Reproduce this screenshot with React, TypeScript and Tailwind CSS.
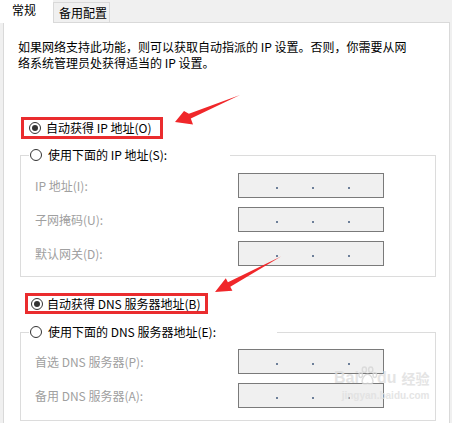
import type { ReactNode } from "react";

const font = "font-['Noto_Sans_CJK_SC','Noto_Sans',sans-serif]";

function Radio({ checked }: { checked?: boolean }) {
  return (
    <span className="flex h-[12px] w-[12px] shrink-0 items-center justify-center rounded-full border border-[#333] bg-white">
      {checked ? <span className="h-[6px] w-[6px] rounded-full bg-[#333]" /> : null}
    </span>
  );
}

function IpBox() {
  return (
    <div className="flex h-[25px] w-[146px] items-center gap-[34px] border border-[#7a7a7a] bg-[#f0f0f0] pl-[37px] pt-[5px]">
      <span className="h-[2px] w-[2px] bg-[#6d7f99]" />
      <span className="h-[2px] w-[2px] bg-[#6d7f99]" />
      <span className="h-[2px] w-[2px] bg-[#6d7f99]" />
    </div>
  );
}

function Row({ label }: { label: string }) {
  return (
    <div className="flex items-center">
      <span className="w-[217px] pl-[14px] text-[#a0a0a0]">{label}</span>
      <IpBox />
    </div>
  );
}

function Group({
  legend,
  legendWidth,
  pt,
  pb,
  children,
}: {
  legend: string;
  legendWidth: string;
  pt: string;
  pb: string;
  children: ReactNode;
}) {
  return (
    <fieldset className={`ml-[16px] w-[416px] border border-[#dcdcdc] ${pt} ${pb}`}>
      <legend className={`ml-[8px] ${legendWidth} bg-white`}>
        <span className="flex h-[16px] items-center gap-[6px] pl-px">
          <Radio />
          <span className="text-black">{legend}</span>
        </span>
      </legend>
      <div className="flex flex-col gap-[9px]">{children}</div>
    </fieldset>
  );
}

export default function App() {
  return (
    <div className={`relative h-[423px] w-[452px] overflow-hidden bg-[#f0f0f0] text-[12px] leading-[16px] text-black ${font}`}>
      {/* tabs */}
      <div className="flex h-[23px] items-end">
        <div className="flex h-[23px] w-[53px] items-center bg-white pb-[3px] pl-[12px]">常规</div>
        <div className="flex h-[21px] w-[57px] items-center border border-[#d9d9d9] bg-[#f0f0f0] pl-[5px]">
          备用配置
        </div>
        <div className="mr-[2px] h-px flex-1 bg-[#d9d9d9]" />
      </div>

      {/* panel */}
      <div className="ml-[3px] mr-[2px] h-[420px] border-x border-[#d9d9d9] bg-white pt-[16px]">
        <p className="pl-[14px]">
          如果网络支持此功能，则可以获取自动指派的 IP 设置。否则，你需要从网
          <br />
          络系统管理员处获得适当的 IP 设置。
        </p>

        <div className="ml-[17px] mt-[46px] flex h-[22px] w-[142px] items-center gap-[5px] border-[3px] border-[#ea2c2e] pl-[5px]">
          <Radio checked />
          <span>自动获得 IP 地址(O)</span>
        </div>

        <div className="mt-[8px]">
          <Group legend="使用下面的 IP 地址(S):" legendWidth="w-[201px]" pt="pt-[10px]" pb="pb-[10px]">
            <Row label="IP 地址(I):" />
            <Row label="子网掩码(U):" />
            <Row label="默认网关(D):" />
          </Group>
        </div>

        <div className="ml-[21px] mt-[16px] flex h-[21px] w-[183px] items-center gap-[4px] border-[3px] border-[#ea2c2e] pl-[3px]">
          <Radio checked />
          <span>自动获得 DNS 服务器地址(B)</span>
        </div>

        <div className="mt-[10px]">
          <Group legend="使用下面的 DNS 服务器地址(E):" legendWidth="w-[248px]" pt="pt-[9px]" pb="pb-[12px]">
            <Row label="首选 DNS 服务器(P):" />
            <Row label="备用 DNS 服务器(A):" />
          </Group>
        </div>
      </div>

      {/* annotation arrows */}
      <svg className="pointer-events-none absolute inset-0" width="452" height="423" viewBox="0 0 452 423">
        <polygon
          points="240,95 190.8,118.4 193,124.5 175,122 184,111 188.9,113.8"
          fill="#f0272a"
        />
        <polygon
          points="281,256.5 230.3,286.7 232.4,290.7 215,292 225.8,278.3 227.9,282.3"
          fill="#f0272a"
        />
      </svg>

      {/* watermark */}
      <div className="pointer-events-none absolute left-[334px] top-[366px] flex flex-col items-end opacity-80">
        <div className="flex items-end font-['Liberation_Sans',sans-serif] text-[16px] font-bold leading-[18px] text-[#dedede]">
          <span>Bai</span>
          <svg width="20" height="20" viewBox="0 0 22 22" className="-mx-[1px] mb-[1px]">
            <g fill="none" stroke="#d6d6d6" strokeWidth="1.6">
              <ellipse cx="7" cy="4" rx="2.3" ry="3" />
              <ellipse cx="14" cy="4" rx="2.3" ry="3" />
              <ellipse cx="3" cy="10" rx="2" ry="2.6" />
              <ellipse cx="18.5" cy="10" rx="2" ry="2.6" />
              <path d="M10.5 9 C7 9 4.5 14 4.5 17 C4.5 20 8 20 10.5 19 C13 20 16.5 20 16.5 17 C16.5 14 14 9 10.5 9 Z" />
            </g>
          </svg>
          <span>du</span>
          <span className={`ml-[5px] text-[14px] ${font}`}>经验</span>
        </div>
        <div className="mt-[3px] font-['Liberation_Sans',sans-serif] text-[10px] font-bold leading-[12px] text-[#e0e0e0]">
          jingyan.baidu.com
        </div>
      </div>
    </div>
  );
}
